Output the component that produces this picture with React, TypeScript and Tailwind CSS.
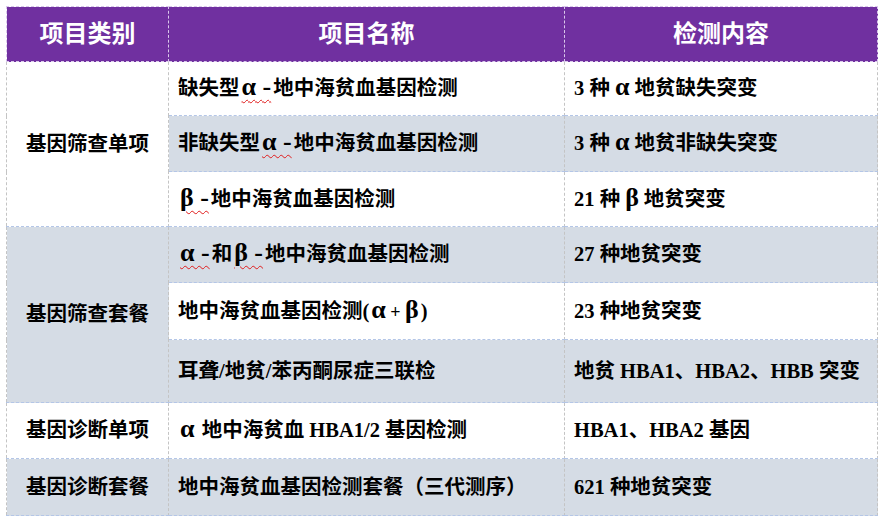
import React from 'react';

const font = { fontFamily: '"Liberation Serif", "Noto Sans CJK SC", serif' };

// greek letters and the dash after them are drawn larger, as in the source document
const G = ({ children, wavy, wide }: { children: React.ReactNode; wavy?: boolean; wide?: boolean }) => (
  <span
    className={`text-[26px] leading-none ${wide ? 'px-[5px]' : 'px-[2px]'} ${wavy ? 'underline decoration-wavy decoration-[#e01b1b] decoration-1 underline-offset-[4px]' : ''}`}
  >
    {children}
  </span>
);

const cell = 'border-r border-b border-dashed border-r-[#c4c4c4] border-b-[#b4c6e7] px-[9px] align-middle text-[20.5px] font-bold text-black whitespace-nowrap';
const cat = 'border-r border-b border-dashed border-r-[#c4c4c4] border-b-[#b4c6e7] text-center align-middle text-[20.5px] font-bold text-black';

const App = () => {
  return (
    <div className="w-[884px] h-[522px] bg-white pt-[6px] pl-[6px]" style={font}>
      <table className="border-collapse table-fixed w-[871px] border-l border-dashed border-l-[#c4c4c4]">
        <colgroup>
          <col className="w-[162px]" />
          <col className="w-[396px]" />
          <col className="w-[313px]" />
        </colgroup>
        <thead>
          <tr className="h-[55px] bg-[#7030a0] text-white text-[24px] font-bold">
            <th className="border border-dashed border-[#d9c8ea] text-center align-middle">项目类别</th>
            <th className="border border-dashed border-[#d9c8ea] text-center align-middle">项目名称</th>
            <th className="border border-dashed border-[#d9c8ea] text-center align-middle">检测内容</th>
          </tr>
        </thead>
        <tbody>
          <tr className="h-[54px]">
            <td rowSpan={3} className={`${cat} bg-white`}>基因筛查单项</td>
            <td className={`${cell} bg-white`}>缺失型<G wavy>α -</G>地中海贫血基因检测</td>
            <td className={`${cell} bg-white`}>3 种<G wide>α</G>地贫缺失突变</td>
          </tr>
          <tr className="h-[56px] bg-[#d5dce5]">
            <td className={cell}>非缺失型<G wavy>α -</G>地中海贫血基因检测</td>
            <td className={cell}>3 种<G wide>α</G>地贫非缺失突变</td>
          </tr>
          <tr className="h-[55px] bg-white">
            <td className={cell}><G wavy>β -</G>地中海贫血基因检测</td>
            <td className={cell}>21 种<G wide>β</G>地贫突变</td>
          </tr>
          <tr className="h-[56px] bg-[#d5dce5]">
            <td rowSpan={3} className={`${cat} bg-[#d5dce5]`}>基因筛查套餐</td>
            <td className={cell}><G wavy>α -</G>和<G wavy>β -</G>地中海贫血基因检测</td>
            <td className={cell}>27 种地贫突变</td>
          </tr>
          <tr className="h-[57px] bg-white">
            <td className={cell}>地中海贫血基因检测(<G>α<span className="text-[18px]"> + </span>β</G>)</td>
            <td className={cell}>23 种地贫突变</td>
          </tr>
          <tr className="h-[63px] bg-[#d5dce5]">
            <td className={cell}>耳聋/地贫/苯丙酮尿症三联检</td>
            <td className={cell}>地贫 HBA1、HBA2、HBB 突变</td>
          </tr>
          <tr className="h-[56px] bg-white">
            <td className={cat}>基因诊断单项</td>
            <td className={cell}><G>α</G> 地中海贫血 HBA1/2 基因检测</td>
            <td className={cell}>HBA1、HBA2 基因</td>
          </tr>
          <tr className="h-[57px] bg-[#d5dce5]">
            <td className={cat}>基因诊断套餐</td>
            <td className={cell}>地中海贫血基因检测套餐（三代测序）</td>
            <td className={cell}>621 种地贫突变</td>
          </tr>
        </tbody>
      </table>
    </div>
  );
};

export default App;
